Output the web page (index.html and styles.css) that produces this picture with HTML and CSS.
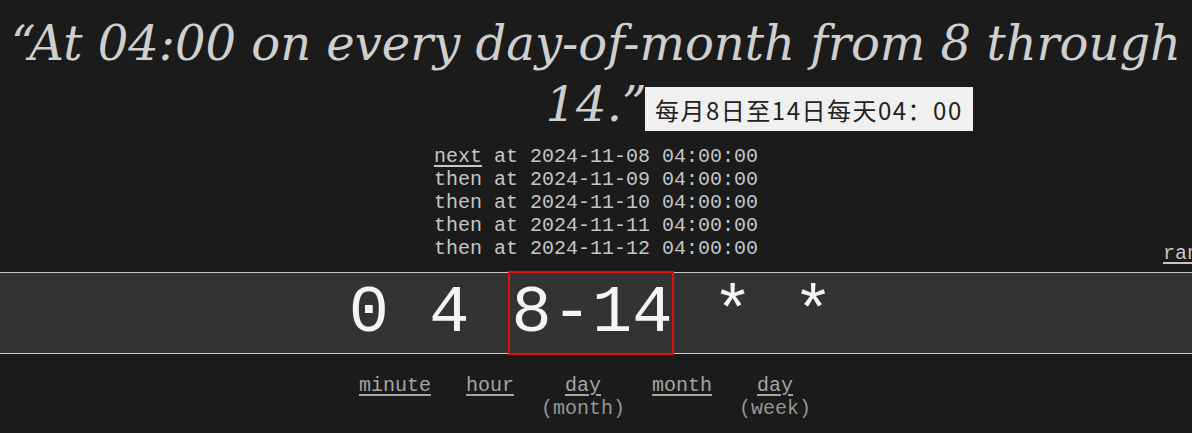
FILE: index.html
```html
<!DOCTYPE html>
<html lang="en">
<head>
<meta charset="utf-8">
<title>crontab guru</title>
<link rel="stylesheet" href="styles.css">
</head>
<body>
<div class="page">
  <h1 class="human">“At 04:00 on every day-of-month from 8 through 14.”</h1>
  <div class="translation">每月8日至14日每天04：00</div>

  <div class="next-row">
    <div class="spacer"></div>
    <div class="next-list">
      <div><a class="link" href="#">next</a> at 2024-11-08 04:00:00</div>
      <div>then at 2024-11-09 04:00:00</div>
      <div>then at 2024-11-10 04:00:00</div>
      <div>then at 2024-11-11 04:00:00</div>
      <div>then at 2024-11-12 04:00:00</div>
    </div>
    <div class="random-cell"><a class="link random" href="#">random</a></div>
  </div>

  <div class="cron-bar">
    <div class="cron-text">0 4 <span class="active">8-14</span> * *</div>
  </div>

  <div class="parts">
    <div class="part part-minute"><a class="link" href="#">minute</a></div>
    <div class="part"><a class="link" href="#">hour</a></div>
    <div class="part"><a class="link" href="#">day</a><span class="sub">(month)</span></div>
    <div class="part"><a class="link" href="#">month</a></div>
    <div class="part"><a class="link" href="#">day</a><span class="sub">(week)</span></div>
  </div>
</div>
</body>
</html>
```

FILE: styles.css
```css
html, body {
  margin: 0;
  padding: 0;
  background: #1b1b1b;
  overflow: hidden;
}

.page {
  position: relative;
  width: 1192px;
  height: 433px;
  overflow: hidden;
  color: #c6c6c6;
  font-family: "Liberation Mono", "Courier New", monospace;
  font-size: 20px;
}

.human {
  margin: 0;
  padding-top: 13px;
  font-family: "DejaVu Serif", Georgia, serif;
  font-style: italic;
  font-weight: normal;
  font-size: 48px;
  line-height: 61px;
  text-align: center;
  color: #cfcfcf;
}

.translation {
  position: absolute;
  left: 645px;
  top: 87px;
  height: 44px;
  box-sizing: border-box;
  padding: 0 10px;
  display: flex;
  align-items: center;
  background: #f0f0f0;
  color: #222;
  font-family: "Noto Sans CJK SC", "Noto Sans CJK JP", serif;
  font-size: 24px;
  letter-spacing: 1.5px;
}

.next-row {
  display: grid;
  grid-template-columns: 1fr auto 1fr;
  margin-top: 10px;
}

.next-list {
  line-height: 23px;
  white-space: nowrap;
  color: #c6c6c6;
}

.random-cell {
  display: flex;
  justify-content: flex-end;
  align-items: flex-end;
  margin-right: -43px;
}

.link {
  color: #c6c6c6;
  text-decoration: underline;
  text-underline-offset: 3px;
}

.random {
  line-height: 23px;
  position: relative;
  top: 5px;
}

.cron-bar {
  margin-top: 12px;
  border-top: 1px solid #c8c8c8;
  border-bottom: 1px solid #c8c8c8;
  background: #333333;
  height: 80px;
}

.cron-text {
  font-size: 67px;
  line-height: 80px;
  white-space: pre;
  text-align: center;
  color: #f4f4f4;
  padding-right: 10px;
}

.active {
  display: inline-block;
  box-shadow: 0 0 0 2px #dd1111;
  line-height: 80px;
  padding: 0 0 0 2px;
}

.parts {
  display: flex;
  justify-content: center;
  align-items: flex-start;
  gap: 27px;
  padding-right: 22px;
  margin-top: 20px;
}

.part {
  display: flex;
  flex-direction: column;
  align-items: center;
  line-height: 23px;
  color: #a4a4a4;
}

.part .link {
  color: #a4a4a4;
}

.part-minute {
  margin-right: 8px;
}

.sub {
  color: #969696;
}
```
